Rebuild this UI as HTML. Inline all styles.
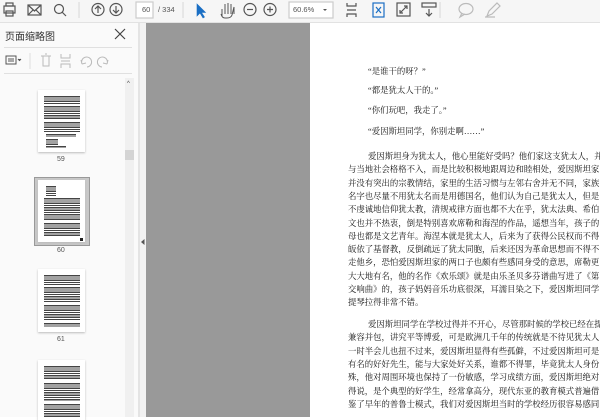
<!DOCTYPE html>
<html><head><meta charset="utf-8"><style>
*{margin:0;padding:0;box-sizing:border-box}
body{width:600px;height:417px;overflow:hidden;background:#fff;position:relative;font-family:"Liberation Sans","Noto Sans CJK SC",sans-serif}
.a{position:absolute}
#tb{left:0;top:0;width:600px;height:23px;background:#f6f6f6;border-bottom:1px solid #e2e2e2}
#lp{left:0;top:23px;width:138px;height:394px;background:#fafafa}
#gray{left:146px;top:23px;width:164px;height:394px;background:#999}
#page{left:310px;top:23px;width:290px;height:394px;background:#fff}
.t{font-family:"Liberation Serif","Noto Serif CJK SC",serif;font-size:8.4px;color:#111;white-space:nowrap;position:absolute;line-height:10px}
.thumb{position:absolute;background:#fff;box-shadow:0 1px 2px #bbb}
.lbl{position:absolute;font-size:7px;color:#555}
.blk{position:absolute;left:44px;width:36px;background:repeating-linear-gradient(#444 0 1.3px,#fff 1.3px 2.3px)}
svg{position:absolute}
</style></head><body>
<div id="tb" class="a"></div>
<svg style="left:0;top:0" width="600" height="23" fill="none" stroke="#555" stroke-width="1.2">
<rect x="4" y="6" width="11" height="7"/><rect x="6" y="3" width="7" height="3"/><rect x="6" y="11" width="7" height="5"/>
<rect x="28" y="5" width="13" height="10"/><path d="M28 5l6.5 6 6.5-6M28 15l5-5M41 15l-5-5"/>
<circle cx="59" cy="9" r="4.5"/><path d="M62 12l4 4"/>
<circle cx="98" cy="9.5" r="6"/><path d="M98 13V6M95 9l3-3 3 3"/>
<circle cx="116" cy="9.5" r="6"/><path d="M116 6v7M113 10l3 3 3-3"/>
<rect x="136" y="2" width="17" height="16" fill="#fff" stroke="#ccc"/>
<path d="M79 2v16M183 2v16M440 2v16" stroke="#ddd"/>
<path d="M197 4v12l3-3 3 5 1.5-1-3-4.5h4z" fill="#1a6fc4" stroke="#1a6fc4" stroke-width=".6"/>
<path d="M222 16v-7M225 14V4M228 14V3M231 14V4M234 14v-7l-2 8q-1 3-5 3h-2q-3 0-4-4" stroke-width="1"/>
<circle cx="250" cy="9.5" r="6"/><path d="M247 9.5h6"/>
<circle cx="270" cy="9.5" r="6"/><path d="M267 9.5h6M270 6.5v6"/>
<rect x="289" y="2" width="44" height="16" fill="#fff" stroke="#ccc"/>
<path d="M323 9l2 2 2-2" fill="#555" stroke="none"/>
<path d="M347 3v3h9V3M347 17v-3h9v3M347 10h9" />
<rect x="373" y="3" width="11" height="14" stroke="#1a6fc4"/><path d="M376 7l5 6M381 7l-5 6" stroke="#1a6fc4"/>
<rect x="397" y="3" width="13" height="13"/><path d="M400 13l7-7M404 6h3v3M400 10v3h3"/>
<rect x="422" y="3" width="14" height="4"/><path d="M429 9v7M426 13l3 3 3-3"/>
<ellipse cx="466" cy="9" rx="7" ry="5.5" stroke="#bbb"/><path d="M462 13l-2 4 5-3" stroke="#bbb"/>
<path d="M487 16l2-5 8-8 3 3-8 8zM485 17h10" stroke="#bbb"/>
</svg>
<div class="a" style="left:142px;top:5px;font-size:7.5px;color:#555">60</div>
<div class="a" style="left:158px;top:5px;font-size:7.5px;color:#555">/ 334</div>
<div class="a" style="left:293px;top:5px;font-size:7.5px;color:#555">60.6%</div>

<div id="lp" class="a"></div>
<div class="a" style="left:5px;top:28px;font-size:10px;color:#333">页面缩略图</div>
<svg style="left:114px;top:28px" width="12" height="12" stroke="#444" stroke-width="1.2"><path d="M1 1l10 10M11 1L1 11"/></svg>
<div class="a" style="left:4px;top:47px;width:128px;height:1px;background:#e0e0e0"></div>
<svg style="left:0;top:50px" width="138" height="22" fill="none" stroke="#555" stroke-width="1">
<rect x="6" y="6" width="10" height="8"/><path d="M8 9h6M8 11h6"/><path d="M18 9l1.5 1.5L21 9" fill="#555"/>
<path d="M30 3v16" stroke="#ddd"/>
<path d="M41 6h10M43 6v10h6V6M45 4h2" stroke="#bbb"/>
<path d="M61 4v4h9V4M61 18v-4h9v4M61 11h9" stroke="#bbb"/>
<path d="M82 14a5 5 0 1 1 5 3M82 14l-1-4M82 14l4-1" stroke="#bbb"/>
<path d="M107 14a5 5 0 1 0-5 3M107 14l1-4M107 14l-4-1" stroke="#bbb"/>
</svg>
<div class="a" style="left:4px;top:73px;width:128px;height:1px;background:#e0e0e0"></div>
<div class="a" style="left:125px;top:78px;width:9px;height:339px;background:#f0f0f0"></div>
<div class="a" style="left:127px;top:81px;font-size:6px;color:#444">^</div>
<div class="a" style="left:125px;top:150px;width:9px;height:10px;background:#d4d4d4"></div>
<div class="a" style="left:138px;top:23px;width:2px;height:394px;background:#e4e4e4"></div>
<div class="a" style="left:140px;top:23px;width:6px;height:394px;background:#f2f2f2"></div>
<svg style="left:140px;top:238px" width="6" height="8"><path d="M4.5 1v6L1 4z" fill="#555"/></svg>

<div class="thumb" style="left:38px;top:90px;width:47px;height:62px"></div>
<div class="lbl" style="left:57px;top:156px">59</div>
<div class="a" style="left:34px;top:177px;width:56px;height:69px;background:#c8c8c8;border:1px solid #999"></div>
<div class="thumb" style="left:38px;top:180px;width:47px;height:62px"></div>
<div class="lbl" style="left:57px;top:247px">60</div>
<div class="thumb" style="left:38px;top:269px;width:47px;height:63px"></div>
<div class="lbl" style="left:57px;top:336px">61</div>
<div class="thumb" style="left:38px;top:360px;width:47px;height:60px"></div>

<div class="blk" style="top:96px;height:8px"></div>
<div class="blk" style="top:106px;height:14px"></div>
<div class="blk" style="top:122px;height:10px"></div>
<div class="blk" style="top:134px;height:3px;width:30px;left:46px"></div>
<div class="blk" style="top:139px;height:6px;width:12px;left:46px"></div>
<div class="blk" style="top:146px;height:2px;width:20px;left:46px"></div>
<div class="blk" style="top:186px;height:10px;width:10px;left:46px"></div>
<div class="blk" style="top:198px;height:23px"></div>
<div class="blk" style="top:223px;height:13px"></div>
<div class="a" style="left:80px;top:238px;width:3px;height:3px;background:#222"></div>
<div class="blk" style="top:275px;height:10px"></div>
<div class="blk" style="top:287px;height:16px"></div>
<div class="blk" style="top:305px;height:16px"></div>
<div class="blk" style="top:323px;height:4px"></div>
<div class="blk" style="top:366px;height:14px"></div>
<div class="blk" style="top:383px;height:18px"></div>
<div class="blk" style="top:404px;height:13px"></div>

<div id="gray" class="a"></div>
<div id="page" class="a"></div>
<div class="t" style="left:368px;top:67px">“是谁干的呀？”</div>
<div class="t" style="left:368px;top:86px">“都是犹太人干的。”</div>
<div class="t" style="left:368px;top:106px">“你们玩吧，我走了。”</div>
<div class="t" style="left:368px;top:127px">“爱因斯坦同学，你别走啊……”</div>
<div class="t" style="left:368px;top:152px">爱因斯坦身为犹太人，他心里能好受吗？他们家这支犹太人，并</div>
<div class="t" style="left:348px;top:165.3px">与当地社会格格不入，而是比较积极地跟周边和睦相处，爱因斯坦家</div>
<div class="t" style="left:348px;top:178.6px">并没有突出的宗教情结，家里的生活习惯与左邻右舍并无不同，家族</div>
<div class="t" style="left:348px;top:191.9px">名字也尽量不用犹太名而是用德国名，他们认为自己是犹太人，但是</div>
<div class="t" style="left:348px;top:205.2px">不虔诚地信仰犹太教，清规戒律方面也都不大在乎，犹太法典、希伯</div>
<div class="t" style="left:348px;top:218.5px">文也并不热衷，倒是特别喜欢席勒和海涅的作品，遥想当年，孩子的</div>
<div class="t" style="left:348px;top:231.8px">母也都是文艺青年。海涅本就是犹太人，后来为了获得公民权而不得</div>
<div class="t" style="left:348px;top:245.1px">皈依了基督教，反倒疏远了犹太同胞，后来还因为革命思想而不得不</div>
<div class="t" style="left:348px;top:258.4px">走他乡，恐怕爱因斯坦家的两口子也颇有些感同身受的意思，席勒更</div>
<div class="t" style="left:348px;top:271.7px">大大地有名，他的名作《欢乐颂》就是由乐圣贝多芬谱曲写进了《第</div>
<div class="t" style="left:348px;top:285px">交响曲》的，孩子妈妈音乐功底很深，耳濡目染之下，爱因斯坦同学</div>
<div class="t" style="left:348px;top:298.3px">提琴拉得非常不错。</div>
<div class="t" style="left:368px;top:320px">爱因斯坦同学在学校过得并不开心，尽管那时候的学校已经在提倡</div>
<div class="t" style="left:348px;top:333.3px">兼容并包，讲究平等博爱，可是欧洲几千年的传统就是不待见犹太人</div>
<div class="t" style="left:348px;top:346.6px">一时半会儿也扭不过来，爱因斯坦显得有些孤僻，不过爱因斯坦可是</div>
<div class="t" style="left:348px;top:359.9px">有名的好好先生，能与大家处好关系，谁都不得罪，毕竟犹太人身份</div>
<div class="t" style="left:348px;top:373.2px">殊，他对周围环境也保持了一份敏感，学习成绩方面，爱因斯坦绝对</div>
<div class="t" style="left:348px;top:386.5px">得说，是个典型的好学生，经常拿高分，现代东亚的教育模式普遍借</div>
<div class="t" style="left:348px;top:399.8px">鉴了早年的普鲁士模式，我们对爱因斯坦当时的学校经历很容易感同</div>
</body></html>
